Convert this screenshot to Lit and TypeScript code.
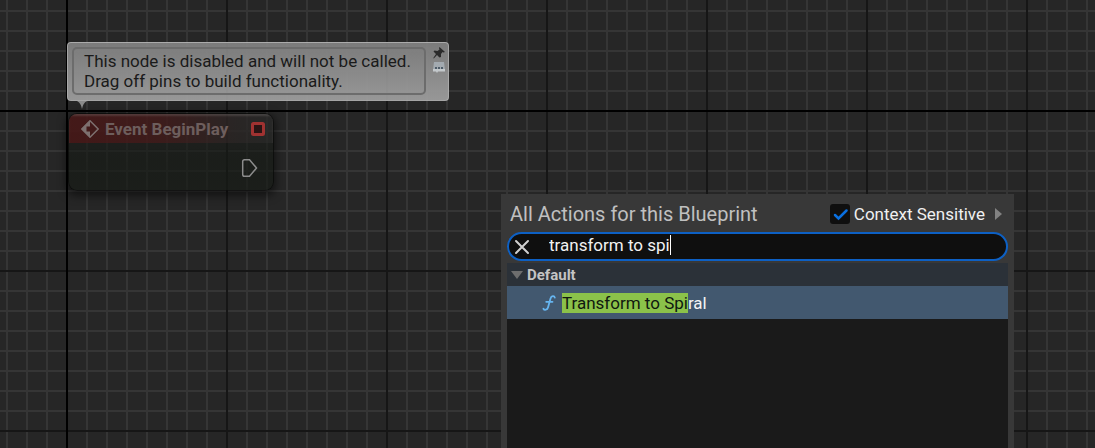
import { LitElement, html, css, svg } from "lit";
import { customElement, property, state } from "lit/decorators.js";

@customElement("event-node")
class EventNode extends LitElement {
  @property() title = "";

  static styles = css`
    :host { display: block; }
    .node {
      box-sizing: border-box;
      width: 206px;
      border: 1px solid rgba(0, 0, 0, 0.5);
      border-radius: 9px;
      overflow: hidden;
      background: linear-gradient(rgba(30, 31, 30, 0.6), rgba(22, 26, 21, 0.68) 60%, rgba(23, 27, 22, 0.7));
      box-shadow: 0 3px 8px 2px rgba(0, 0, 0, 0.5);
    }
    .head {
      display: flex;
      align-items: center;
      gap: 6px;
      height: 29px;
      padding: 0 8px 0 12px;
      box-sizing: border-box;
      background: linear-gradient(90deg, rgba(80, 22, 22, 0.75), rgba(76, 26, 26, 0.65) 45%, rgba(52, 42, 42, 0.5) 80%, rgba(50, 50, 50, 0.4));
      box-shadow: inset 0 2px 2px rgba(120, 114, 112, 0.35);
      color: #6d5e5d;
      font-weight: 700;
      font-size: 17px;
      line-height: 20px;
    }
    .name { flex: 1; white-space: nowrap; }
    .pins { display: flex; justify-content: flex-end; padding: 15px 14px 12px 0; }
    svg { display: block; }
  `;

  render() {
    return html`<article class="node">
      <header class="head">
        <svg width="18" height="18" viewBox="0 0 18 18" aria-hidden="true">
          <path d="M9 .8 17.200 9 9 17.200 .8 9Z" fill="none" stroke="#7d706f" stroke-width="1.500" />
          <path d="M9 .5V6.500H5.500V11.500H9V17.500L.5 9Z" fill="#7d706f" />
        </svg>
        <span class="name">${this.title}</span>
        <svg width="14" height="14" viewBox="0 0 14 14" aria-hidden="true">
          <rect x="1.500" y="1.500" width="11" height="11" rx="1" fill="#2a1414" stroke="#a03231" stroke-width="3" />
        </svg>
      </header>
      <div class="pins">
        <svg width="18" height="20" viewBox="0 0 18 20" aria-hidden="true">
          <path d="M3.500 1.700H8.500L15.500 10 8.500 18.300H3.500Q1.700 18.300 1.700 16.500V3.500Q1.700 1.700 3.500 1.700Z" fill="none" stroke="#8c8c8c" stroke-width="1.500" />
        </svg>
      </div>
    </article>`;
  }
}

@customElement("note-bubble")
class NoteBubble extends LitElement {
  static styles = css`
    :host { display: block; }
    .bubble {
      display: flex;
      gap: 7px;
      padding: 4px 3px 5px 4px;
      border: 1px solid rgba(176, 176, 176, 0.8);
      border-radius: 4px;
      background: linear-gradient(rgba(130, 130, 130, 0.92), rgba(160, 160, 160, 0.92));
    }
    .text {
      margin: 0;
      padding: 2px 13px 2px 10px;
      border: 2px solid #6c6c6c;
      border-radius: 5px;
      color: #1a1a1a;
      font-size: 17px;
      line-height: 20px;
      white-space: nowrap;
    }
    .tools { display: flex; flex-direction: column; gap: 3px; }
    .tool { display: block; padding: 0; border: 0; background: none; }
    svg { display: block; }
    .tail { margin-left: 10px; }
  `;

  render() {
    return html`<div class="bubble">
        <p class="text"><slot></slot></p>
        <div class="tools">
          <button class="tool" aria-label="Pin comment">
            <svg width="12" height="12" viewBox="0 0 12 12">
              <path d="M6.500 0 12 5 10.500 5.500 9.500 5 8 7 8 10 6.500 10.500 4 8 .8 11.500 .3 11 3 7 .5 4.500 1.500 3.500 4.500 4 6.500 2.500 6 1Z" fill="#2b2b2b" />
            </svg>
          </button>
          <button class="tool" aria-label="Toggle comment bubble">
            <svg width="12" height="12" viewBox="0 0 12 12">
              <path d="M1 0H11L12 8H0Z" fill="#a3aab0" />
              <path d="M0 7H12V9.500H5L4 11 3 9.500H0Z" fill="#c3c8cb" />
              <path d="M2 5h2v2H2zM5 5h2v2H5zM8 5h2v2H8z" fill="#4e5c68" />
            </svg>
          </button>
        </div>
      </div>
      <svg class="tail" width="10" height="8" viewBox="0 0 10 8" aria-hidden="true">
        <path d="M0 0H10Q6 2 5 8 4 2 0 0Z" fill="#8a8a8a" />
      </svg>`;
  }
}

@customElement("action-menu")
class ActionMenu extends LitElement {
  @state() private query = "transform to spi";
  @state() private sensitive = true;
  private actions = ["Transform to Spiral"];

  static styles = css`
    :host {
      display: flex;
      flex-direction: column;
      box-sizing: border-box;
      padding: 6px 6px 0;
      background: #383838;
    }
    .top { display: flex; align-items: center; justify-content: space-between; height: 28px; padding: 0 6px 0 3px; }
    .title { margin: 0; color: #c0c0c0; font-size: 20px; font-weight: 400; line-height: 24px; }
    .options { display: flex; align-items: center; gap: 10px; }
    .check { display: flex; align-items: center; gap: 4px; color: #f0f0f0; font-size: 17px; line-height: 20px; }
    .box {
      appearance: none;
      width: 20px;
      height: 20px;
      margin: 0;
      border-radius: 3px;
      background: #0f0f0f;
    }
    .tick { display: grid; }
    .tick > * { grid-area: 1 / 1; pointer-events: none; }
    .tick > .box { pointer-events: auto; }
    .more { padding: 0; border: 0; background: none; }
    svg { display: block; }
    .search {
      display: flex;
      align-items: center;
      box-sizing: border-box;
      height: 29px;
      margin-top: 4px;
      padding: 0 5px;
      border: 2px solid #0d60c4;
      border-radius: 15px;
      background: #0f0f0f;
    }
    .clear { padding: 0; border: 0; background: none; margin-right: 19px; }
    .entry { display: flex; align-items: center; padding-bottom: 4px; }
    .query {
      field-sizing: content;
      padding: 0;
      border: 0;
      outline: 0;
      background: none;
      color: #f2f2f2;
      caret-color: transparent;
      font: 17px/20px Roboto, sans-serif;
    }
    .caret { width: 1px; height: 20px; background: #fff; }
    .list { flex: 1; margin-top: 2px; background: #1a1a1a; }
    .group {
      display: flex;
      align-items: center;
      gap: 4px;
      height: 23px;
      margin: 0;
      padding: 0 4px;
      background: #2b3138;
      color: #c4c4c4;
      font-size: 15px;
      font-weight: 700;
    }
    .items { margin: 0; padding: 0; list-style: none; }
    .item {
      display: flex;
      align-items: center;
      gap: 6px;
      height: 33px;
      padding: 0 35px;
      background: #42586f;
      color: #f4f4f4;
      font-size: 17px;
      line-height: 20px;
    }
    .hit { background: #8bc24a; color: #101810; }
  `;

  private label(name: string) {
    const n = this.query.length;
    return name.toLowerCase().startsWith(this.query.toLowerCase())
      ? html`<span><mark class="hit">${name.slice(0, n)}</mark>${name.slice(n)}</span>`
      : html`<span>${name}</span>`;
  }

  render() {
    return html`<header class="top">
        <h2 class="title">All Actions for this Blueprint</h2>
        <div class="options">
          <label class="check">
            <span class="tick">
              <input class="box" type="checkbox" .checked=${this.sensitive}
                @change=${(e: Event) => (this.sensitive = (e.target as HTMLInputElement).checked)} />
              <svg width="20" height="20" viewBox="0 0 20 20">
                ${this.sensitive
                  ? svg`<path d="M5 11 8.500 14.500 16.500 6.500" fill="none" stroke="#0a70e0" stroke-width="2.500" stroke-linecap="round" />`
                  : null}
              </svg>
            </span>
            Context Sensitive
          </label>
          <button class="more" aria-label="Context options">
            <svg width="7" height="12" viewBox="0 0 7 12"><path d="M0 0 7 6 0 12Z" fill="#828282" /></svg>
          </button>
        </div>
      </header>
      <div class="search">
        <button class="clear" aria-label="Clear search" @click=${() => (this.query = "")}>
          <svg width="16" height="16" viewBox="0 0 16 16">
            <path d="M2 2 14 14M14 2 2 14" stroke="#d0d0d0" stroke-width="2" stroke-linecap="round" />
          </svg>
        </button>
        <div class="entry">
          <input class="query" type="text" aria-label="Search actions" .value=${this.query}
            @input=${(e: Event) => (this.query = (e.target as HTMLInputElement).value)} />
          <span class="caret"></span>
        </div>
      </div>
      <section class="list">
        <h3 class="group">
          <svg width="12" height="8" viewBox="0 0 12 8"><path d="M0 0H12L6 8Z" fill="#6e6e6e" /></svg>
          Default
        </h3>
        <ul class="items">
          ${this.actions.map(
            (name) => html`<li class="item">
              <svg width="14" height="18" viewBox="0 0 14 18" aria-hidden="true">
                <path d="M12.800 3.600C12.400 1.700 9.400 1.500 8.500 4.500L6 13.500C5.300 16 2.400 16.500 1.400 14.700M4.200 7.800H10.500" fill="none" stroke="#66b5f0" stroke-width="1.800" stroke-linecap="round" />
              </svg>
              ${this.label(name)}
            </li>`
          )}
        </ul>
      </section>`;
  }
}

@customElement("app-root")
class AppRoot extends LitElement {
  static styles = css`
    :host {
      --axis: #000;
      --major: #161616;
      --minor: #353535;
      display: block;
      position: relative;
      min-height: 100vh;
      overflow: hidden;
      font-family: Roboto, sans-serif;
      background:
        linear-gradient(var(--axis), var(--axis)) 66px 0 / 2px 100% no-repeat,
        linear-gradient(var(--axis), var(--axis)) 0 110px / 100% 2px no-repeat,
        linear-gradient(90deg, var(--major) 2px, transparent 2px) 66px 0 / 160px 160px,
        linear-gradient(var(--major) 2px, transparent 2px) 0 110px / 160px 160px,
        linear-gradient(90deg, var(--minor) 2px, transparent 2px) 6px 0 / 20px 20px,
        linear-gradient(var(--minor) 2px, transparent 2px) 0 10px / 20px 20px,
        #262626;
    }
    .note { position: absolute; left: 67px; top: 42px; }
    .event { position: absolute; left: 68px; top: 113px; }
    .menu { position: absolute; left: 501px; right: 81px; top: 194px; bottom: 0; }
  `;

  render() {
    return html`
      <event-node class="event" title="Event BeginPlay"></event-node>
      <note-bubble class="note">This node is disabled and will not be called.<br />Drag off pins to build functionality.</note-bubble>
      <action-menu class="menu"></action-menu>
    `;
  }
}
